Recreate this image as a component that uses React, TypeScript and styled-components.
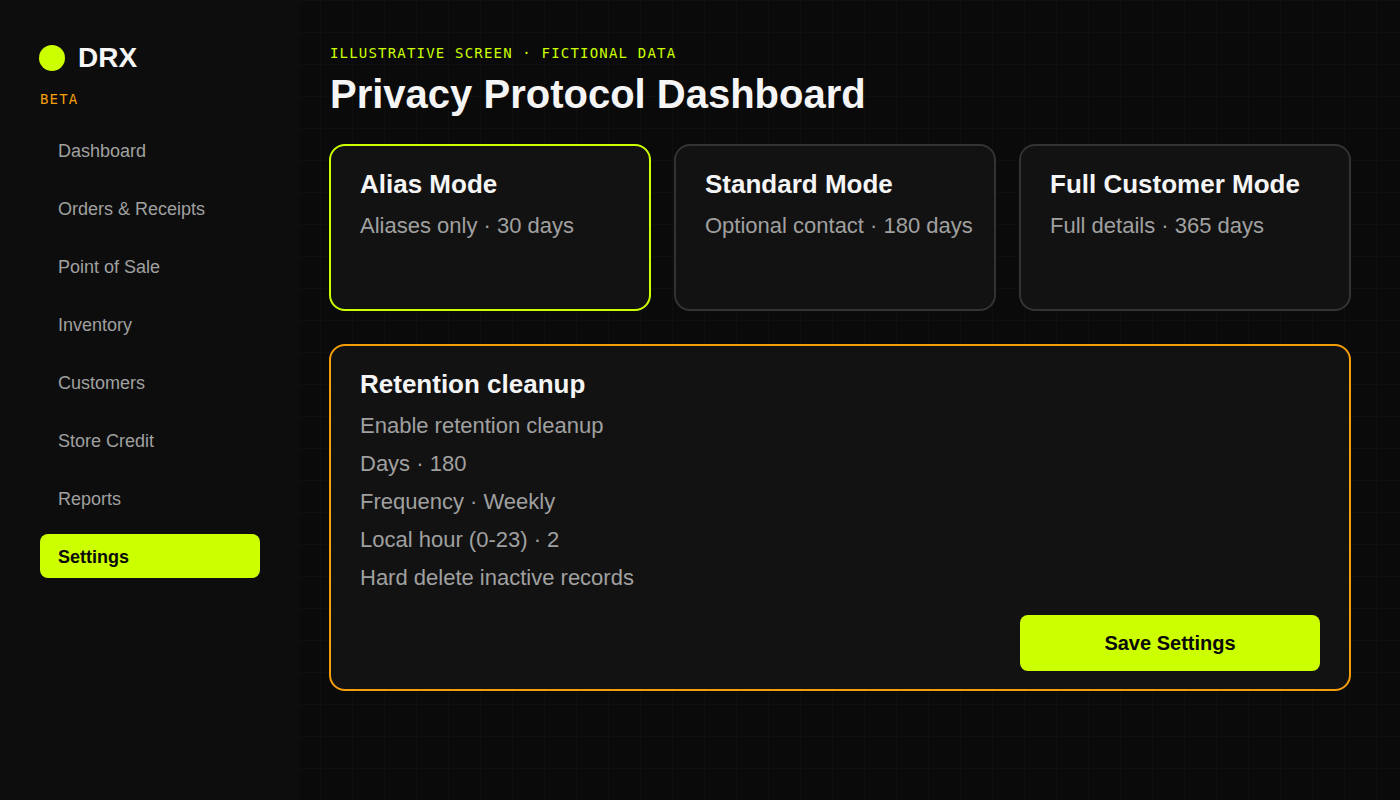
import { FC } from 'react'
import styled, { createGlobalStyle, ThemeProvider } from 'styled-components'

const theme = {
	colors: {
		page: '#0a0a0a',
		grid: '#0f0f0f',
		sidebar: '#0d0d0d',
		card: '#121212',
		border: '#333333',
		lime: '#ccff00',
		orange: '#f59e0b',
		white: '#f5f5f5',
		muted: '#a0a0a0',
	},
	fonts: {
		sans: "'Liberation Sans', Arial, sans-serif",
		mono: "'DejaVu Sans Mono', monospace",
	},
}

type Theme = typeof theme
type Accent = 'lime' | 'orange' | 'border'

declare module 'styled-components' {
	export interface DefaultTheme extends Theme {}
}

interface ModeProps {
	title: string
	text: string
	accent: Accent
}

interface NavItemProps {
	label: string
	active?: boolean
}

const navItems: NavItemProps[] = [
	{ label: 'Dashboard' },
	{ label: 'Orders & Receipts' },
	{ label: 'Point of Sale' },
	{ label: 'Inventory' },
	{ label: 'Customers' },
	{ label: 'Store Credit' },
	{ label: 'Reports' },
	{ label: 'Settings', active: true },
]

const modes: ModeProps[] = [
	{ title: 'Alias Mode', text: 'Aliases only · 30 days', accent: 'lime' },
	{ title: 'Standard Mode', text: 'Optional contact · 180 days', accent: 'border' },
	{ title: 'Full Customer Mode', text: 'Full details · 365 days', accent: 'border' },
]

const retention = [
	'Enable retention cleanup',
	'Days · 180',
	'Frequency · Weekly',
	'Local hour (0-23) · 2',
	'Hard delete inactive records',
]

const GlobalStyle = createGlobalStyle`
	* {
		box-sizing: border-box;
		margin: 0;
		padding: 0;
	}

	body {
		background-color: ${({ theme }) => theme.colors.page};
		color: ${({ theme }) => theme.colors.white};
		font-family: ${({ theme }) => theme.fonts.sans};
	}
`

const Layout = styled.div`
	display: flex;
	min-height: 100vh;
	background-image: linear-gradient(${({ theme }) => theme.colors.grid} 1px, transparent 1px),
		linear-gradient(90deg, ${({ theme }) => theme.colors.grid} 1px, transparent 1px);
	background-size: 32px 32px;
`

const Sidebar = styled.aside`
	flex: 0 0 300px;
	padding: 42px 40px;
	background-color: ${({ theme }) => theme.colors.sidebar};
`

const Brand = styled.div`
	display: flex;
	align-items: center;
	gap: 13px;
	margin-left: -1px;
	font-size: 28px;
	font-weight: 700;
	line-height: 32px;
`

const Dot = styled.span`
	width: 26px;
	height: 26px;
	border-radius: 50%;
	background-color: ${({ theme }) => theme.colors.lime};
`

const Label = styled.p<{ $accent: Accent }>`
	color: ${({ theme, $accent }) => theme.colors[$accent]};
	font-family: ${({ theme }) => theme.fonts.mono};
	font-size: 14px;
	line-height: 20px;
	letter-spacing: 0.085em;
`

const Beta = styled(Label)`
	margin-top: 15px;
`

const NavList = styled.ul`
	display: flex;
	flex-direction: column;
	gap: 14px;
	margin-top: 19px;
	list-style: none;
`

const NavLink = styled.a<{ $active?: boolean }>`
	display: block;
	padding: 2px 18px 0;
	border-radius: 8px;
	background-color: ${({ theme, $active }) => ($active ? theme.colors.lime : 'transparent')};
	color: ${({ theme, $active }) => ($active ? theme.colors.page : theme.colors.muted)};
	font-size: 18px;
	font-weight: ${({ $active }) => ($active ? 700 : 400)};
	line-height: 42px;
	text-decoration: none;
`

const Main = styled.main`
	flex: 1;
	min-width: 0;
	padding: 43px 49px 43px 29px;
`

const Header = styled.header`
	padding-left: 1px;
`

const Title = styled.h1`
	margin-top: 8px;
	font-size: 40px;
	line-height: 46px;
`

const Modes = styled.section`
	display: grid;
	grid-template-columns: 322fr 322fr 332fr;
	gap: 23px;
	margin-top: 27px;
`

const Card = styled.article<{ $accent: Accent }>`
	min-height: 167px;
	padding: 23px 19px 18px 29px;
	border: 2px solid ${({ theme, $accent }) => theme.colors[$accent]};
	border-radius: 16px;
	background-color: ${({ theme }) => theme.colors.card};
`

const Panel = styled(Card)`
	display: flex;
	flex-direction: column;
	margin-top: 33px;
	padding-right: 29px;
`

const CardTitle = styled.h2`
	font-size: 26px;
	line-height: 30px;
`

const CardText = styled.p`
	margin-top: 8px;
	color: ${({ theme }) => theme.colors.muted};
	font-size: 22px;
	line-height: 38px;
`

const Settings = styled.ul`
	margin-top: 8px;
	color: ${({ theme }) => theme.colors.muted};
	font-size: 22px;
	line-height: 38px;
	list-style: none;
`

const SaveButton = styled.button`
	align-self: flex-end;
	width: 300px;
	height: 56px;
	margin-top: 18px;
	border: 0;
	border-radius: 8px;
	background-color: ${({ theme }) => theme.colors.lime};
	color: ${({ theme }) => theme.colors.page};
	font-family: inherit;
	font-size: 20px;
	font-weight: 700;
	cursor: pointer;
`

const ModeCard: FC<ModeProps> = ({ title, text, accent }) => (
	<Card $accent={accent}>
		<CardTitle>{title}</CardTitle>
		<CardText>{text}</CardText>
	</Card>
)

const App: FC = () => {
	return (
		<ThemeProvider theme={theme}>
			<GlobalStyle />
			<Layout>
				<Sidebar>
					<Brand>
						<Dot />
						DRX
					</Brand>
					<Beta $accent="orange">BETA</Beta>
					<nav>
						<NavList>
							{navItems.map(({ label, active }) => (
								<li key={label}>
									<NavLink href="#" $active={active} aria-current={active ? 'page' : undefined}>
										{label}
									</NavLink>
								</li>
							))}
						</NavList>
					</nav>
				</Sidebar>
				<Main>
					<Header>
						<Label $accent="lime">ILLUSTRATIVE SCREEN · FICTIONAL DATA</Label>
						<Title>Privacy Protocol Dashboard</Title>
					</Header>
					<Modes>
						{modes.map(mode => (
							<ModeCard key={mode.title} {...mode} />
						))}
					</Modes>
					<Panel as="section" $accent="orange">
						<CardTitle>Retention cleanup</CardTitle>
						<Settings>
							{retention.map(item => (
								<li key={item}>{item}</li>
							))}
						</Settings>
						<SaveButton type="button">Save Settings</SaveButton>
					</Panel>
				</Main>
			</Layout>
		</ThemeProvider>
	)
}

export default App
